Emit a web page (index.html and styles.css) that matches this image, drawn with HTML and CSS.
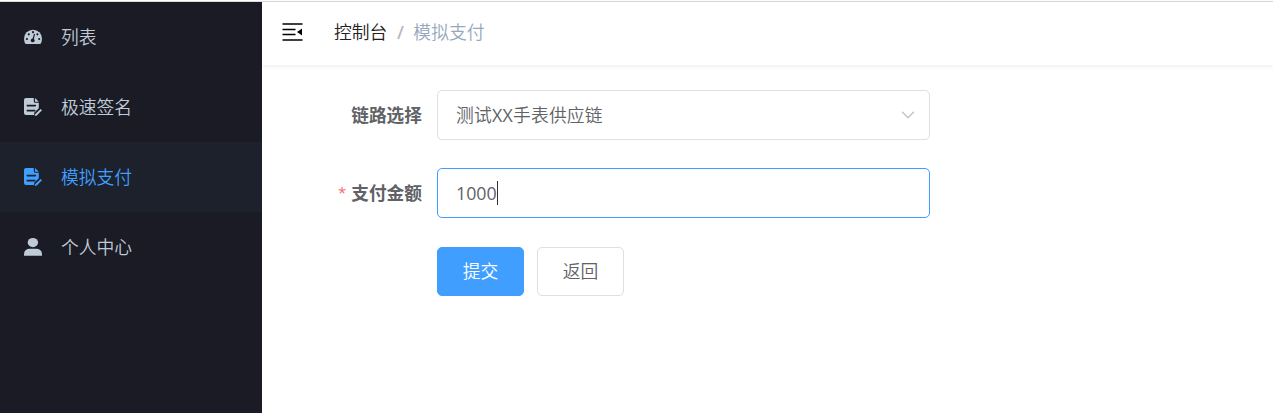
FILE: index.html
```html
<!DOCTYPE html>
<html lang="zh-CN">
<head>
<meta charset="utf-8">
<title>模拟支付</title>
<link rel="stylesheet" href="styles.css">
</head>
<body>
<svg class="symbols" aria-hidden="true">
  <symbol id="doc-edit" viewBox="0 0 18 18">
    <path fill="currentColor" d="M2 0H9.8V3.2Q9.8 4.8 11.4 4.8H14.8V10.2L10.2 14.8V17H2Q0 17 0 15V2Q0 0 2 0ZM11 0L14.8 3.8H11Z"/>
    <path class="cut" d="M3.3 7.6H11.4M3.3 12.6H10.8"/>
    <path fill="currentColor" d="M16.6 10.9L18 12.3L12.8 17.4L10.6 18L11.3 16Z"/>
  </symbol>
</svg>
<div class="app">
  <nav class="sidebar">
    <a class="item">
      <svg class="icon" viewBox="0 0 18 18"><path fill="currentColor" d="M1.6 16Q0 13.8 0 10.7A9 9 0 0 1 18 10.7Q18 13.8 16.4 16Z"/><g class="dots"><circle cx="2.9" cy="11" r="1.1"/><circle cx="4.8" cy="6.3" r="1.1"/><circle cx="9" cy="4.2" r="1.1"/><circle cx="13.4" cy="6.3" r="1.1"/><circle cx="15.2" cy="11" r="1.1"/><circle cx="8.7" cy="12.4" r="1.9"/><path d="M8.2 12L10 5.8L11 6.1L9.6 12.3Z"/></g></svg>
      <span>列表</span>
    </a>
    <a class="item"><svg class="icon"><use href="#doc-edit"/></svg><span>极速签名</span></a>
    <a class="item active"><svg class="icon"><use href="#doc-edit"/></svg><span>模拟支付</span></a>
    <a class="item">
      <svg class="icon" viewBox="0 0 18 18"><ellipse cx="8.9" cy="4.6" rx="5.2" ry="4.6" fill="currentColor"/><path fill="currentColor" d="M0 17.8V16.3Q.2 10.8 6 10.8H12Q17.8 10.8 18 16.3V17.8Z"/></svg>
      <span>个人中心</span>
    </a>
  </nav>
  <div class="main">
    <header class="navbar">
      <svg class="fold" viewBox="0 0 21 18"><path d="M.5 1H20.5M.5 6.5H13.5M.5 11.5H13.5M.5 17H20.5" stroke="#000" stroke-width="1.6"/><path d="M20 5.5V12.5L15 9Z"/></svg>
      <span class="crumb">控制台</span><span class="slash">/</span><span class="crumb current">模拟支付</span>
    </header>
    <form class="form">
      <div class="row">
        <label class="label">链路选择</label>
        <div class="field"><span class="value">测试<span class="latin">XX</span>手表供应链</span><svg class="chevron" viewBox="0 0 14 8"><path d="M1 .8L7 6.8L13 .8" fill="none" stroke="#c0c4cc" stroke-width="1.4"/></svg></div>
      </div>
      <div class="row">
        <label class="label"><span class="required">*</span>支付金额</label>
        <div class="field focused"><span class="amount">1000</span><i class="caret"></i></div>
      </div>
      <div class="actions">
        <button type="button" class="btn primary">提交</button>
        <button type="button" class="btn">返回</button>
      </div>
    </form>
  </div>
</div>
</body>
</html>
```
FILE: styles.css
```css
* { box-sizing: border-box; }
body {
  margin: 0;
  height: 413px;
  overflow: hidden;
  background: #fff;
  padding-top: 1px;
  font: 350 17.8px/24px "Open Sans", "Noto Sans CJK SC", sans-serif;
  color: #606266;
}
.symbols { position: absolute; width: 0; height: 0; }
.app { display: flex; height: 412px; border-top: 1px solid #d9dbdd; }
.sidebar { width: 262px; flex: none; background: #1b1b25; }
.item {
  display: flex;
  align-items: center;
  height: 70px;
  padding-left: 24px;
  color: #bfcbd9;
  --bg: #1b1b25;
}
.item span { margin-left: 19px; }
.active { background: #1c212b; color: #409eff; --bg: #1c212b; }
.icon { width: 18px; height: 18px; flex: none; }
.cut { fill: none; stroke: var(--bg); stroke-width: 1.6; stroke-linecap: round; }
.dots { fill: var(--bg); }
.main { flex: 1; }
.navbar {
  display: flex;
  align-items: center;
  height: 63px;
  padding: 0 0 4px 20px;
  box-shadow: 0 1px 5px rgba(0, 21, 41, .09);
}
.fold { width: 21px; height: 18px; margin-right: 31px; }
.crumb { color: #222; }
.slash { width: 26px; text-align: center; color: #b4b9c3; font-weight: 600; }
.crumb.current { color: #97a8be; }
.form { padding: 25px 0 0; }
.row { display: flex; height: 50px; margin-bottom: 28px; }
.label {
  width: 175px;
  padding-right: 15px;
  line-height: 50px;
  text-align: right;
  font-size: 17.7px;
  font-weight: 700;
}
.required { color: #f56c6c; font-size: 15px; font-weight: 400; margin-right: 5px; vertical-align: 2px; line-height: 1; }
.field {
  display: flex;
  align-items: center;
  width: 493px;
  padding: 0 14px 0 18px;
  border: 1px solid #dcdfe6;
  border-radius: 5px;
}
.value { letter-spacing: .2px; }
.latin, .amount { font-weight: 400; }
.focused { border-color: #409eff; }
.chevron { width: 14px; height: 8px; margin-left: auto; }
.caret { width: 1px; height: 24px; background: #333; }
.actions { display: flex; gap: 13px; padding: 1px 0 0 175px; }
.btn {
  width: 87px;
  height: 49px;
  padding: 0 0 2px;
  border: 1px solid #dcdfe6;
  border-radius: 5px;
  background: #fff;
  color: #606266;
  font: inherit;
}
.primary { background: #409eff; border-color: #409eff; color: #fff; }
```
